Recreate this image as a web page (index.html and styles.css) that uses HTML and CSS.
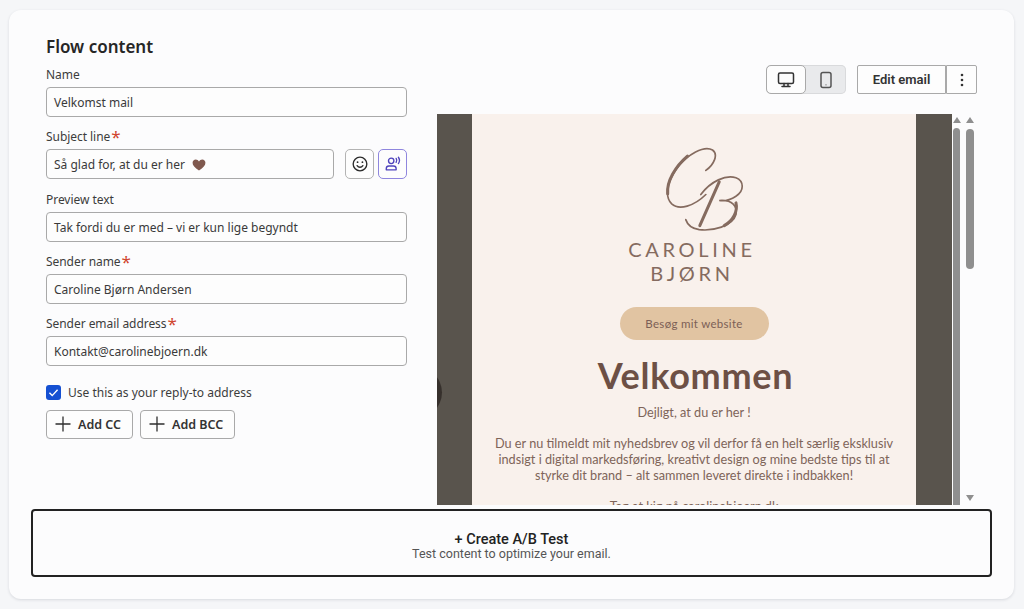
FILE: index.html
```html
<!DOCTYPE html>
<html lang="en">
<head>
<meta charset="utf-8">
<title>Flow content</title>
<link rel="stylesheet" href="styles.css">
</head>
<body>
<main class="card">
  <div class="upper">
    <h1 class="title">Flow content</h1>
    <div class="columns">
      <form class="fields">
        <div class="field">
          <label class="label">Name</label>
          <div class="input">Velkomst mail</div>
        </div>
        <div class="field">
          <label class="label">Subject line<span class="req">*</span></label>
          <div class="input-row">
            <div class="input grow">Så glad for, at du er her
              <svg class="heart" viewBox="0 0 16 14"><path d="M8 13.5C3 9.8.5 7.4.5 4.3.5 2 2.2.5 4.2.5 5.8.5 7.2 1.4 8 2.8 8.8 1.4 10.2.5 11.8.5c2 0 3.7 1.5 3.7 3.8 0 3.1-2.500 5.500-7.500 9.200z"/></svg>
            </div>
            <button type="button" class="icon-btn first">
              <svg viewBox="0 0 20 20" class="ic"><circle cx="10" cy="10" r="7.600"/><circle class="dot" cx="7.300" cy="8" r="1"/><circle class="dot" cx="12.700" cy="8" r="1"/><path d="M6.800 11.800c1.600 2.400 4.800 2.400 6.400 0"/></svg>
            </button>
            <button type="button" class="icon-btn accent">
              <svg viewBox="0 0 20 20" class="ic"><circle cx="8" cy="6.500" r="3"/><path d="M2.500 16.500v-1.300c0-1.800 1.300-3 3-3h5c1.700 0 3 1.200 3 3v1.300z"/><path d="M13.500 3.800c.9 1.400.9 3 0 4.400M16 2.500c1.600 2.300 1.600 4.700 0 7"/></svg>
            </button>
          </div>
        </div>
        <div class="field">
          <label class="label">Preview text</label>
          <div class="input">Tak fordi du er med – vi er kun lige begyndt</div>
        </div>
        <div class="field">
          <label class="label">Sender name<span class="req">*</span></label>
          <div class="input">Caroline Bjørn Andersen</div>
        </div>
        <div class="field">
          <label class="label">Sender email address<span class="req">*</span></label>
          <div class="input">Kontakt@carolinebjoern.dk</div>
        </div>
        <div class="check-row">
          <span class="checkbox"><svg viewBox="0 0 14 14"><path d="M3.200 7.300l2.600 2.600 5-5.400"/></svg></span>
          <span class="check-label">Use this as your reply-to address</span>
        </div>
        <div class="add-row">
          <button type="button" class="add-btn cc"><svg viewBox="0 0 16 16" class="plus"><path d="M8 .5v15M.5 8h15"/></svg>Add CC</button>
          <button type="button" class="add-btn bcc"><svg viewBox="0 0 16 16" class="plus"><path d="M8 .5v15M.5 8h15"/></svg>Add BCC</button>
        </div>
      </form>
      <section class="right">
        <div class="toolbar">
          <div class="toggle">
            <button type="button" class="toggle-btn on">
              <svg viewBox="0 0 18 18" class="ic"><rect x="1.500" y="2" width="15" height="10.500" rx="1.500"/><path d="M7 12.500v2.500M11 12.500v2.500M5 15.500h8"/></svg>
            </button>
            <button type="button" class="toggle-btn">
              <svg viewBox="0 0 18 18" class="ic"><rect x="4" y="1.500" width="10" height="15" rx="2"/><circle class="dot" cx="9" cy="13.800" r=".6"/></svg>
            </button>
          </div>
          <button type="button" class="edit-btn">Edit email</button>
          <button type="button" class="more-btn">
            <svg viewBox="0 0 4 14" class="kebab"><circle cx="2" cy="2" r="1.300"/><circle cx="2" cy="7" r="1.300"/><circle cx="2" cy="12" r="1.300"/></svg>
          </button>
        </div>
        <div class="preview">
          <div class="viewport">
            <span class="arc"></span>
            <article class="email">
              <svg class="monogram" viewBox="255 45 245 260">
                <g class="thin">
                  <path d="M380 118C405 100 418 70 400 57 375 42 325 70 295 110 265 150 255 195 278 218 300 238 345 225 380 190"/>
                  <path d="M365 190C395 150 440 130 470 140 495 150 495 180 470 195 455 205 435 210 420 208 460 205 475 225 470 250 460 285 400 300 360 295 340 292 325 280 320 265"/>
                </g>
                <g class="thick">
                  <path d="M325 75C290 105 262 150 266 188"/>
                  <path d="M420 152L362 283"/>
                  <path d="M470 215C476 240 462 268 435 283"/>
                </g>
              </svg>
              <div class="brand">CAROLINE</div>
              <div class="brand second">BJØRN</div>
              <a class="visit">Besøg mit website</a>
              <h2 class="welcome">Velkommen</h2>
              <p class="line">Dejligt, at du er her !</p>
              <p class="line para">Du er nu tilmeldt mit nyhedsbrev og vil derfor få en helt særlig eksklusiv indsigt i digital markedsføring, kreativt design og mine bedste tips til at styrke dit brand – alt sammen leveret direkte i indbakken!</p>
              <p class="line para">Tag et kig på carolinebjoern.dk</p>
            </article>
          </div>
          <div class="scroll inner"><i class="up"></i><b class="thumb"></b></div>
          <div class="scroll outer"><i class="up"></i><b class="thumb"></b><i class="down"></i></div>
        </div>
      </section>
    </div>
  </div>
  <button type="button" class="ab-test">
    <span class="ab-title">+ Create A/B Test</span>
    <span class="ab-sub">Test content to optimize your email.</span>
  </button>
</main>
</body>
</html>
```
FILE: styles.css
```css
* { box-sizing: border-box; }
html, body { margin: 0; height: 100%; }
body {
  background: #f5f6f8;
  padding: 10px 10px 10px 9px;
  font-family: "Noto Sans", "Open Sans", sans-serif;
  color: #2b2b2b;
  overflow: hidden;
}
button { font: inherit; color: inherit; background: #fdfdfd; padding: 0; cursor: pointer; }
.card {
  width: 1005px;
  height: 589px;
  background: #fcfcfd;
  border-radius: 12px;
  box-shadow: 0 1px 3px rgba(40, 50, 70, .14);
  padding: 23px 22px 22px;
  display: flex;
  flex-direction: column;
}
.upper { padding: 0 15px; }
.title { margin: 0; padding-top: 1px; font-size: 17px; line-height: 25px; font-weight: 600; color: #262626; }
.columns { display: grid; grid-template-columns: 361px 540px; column-gap: 30px; margin-top: 6px; }
.fields { display: flex; flex-direction: column; gap: 10.250px; }
.label { display: block; font-size: 12px; line-height: 19px; margin-bottom: 3px; color: #3c3c3c; letter-spacing: -.05px; }
.req { color: #d0452f; font-size: 17px; line-height: 14px; margin-left: 1px; vertical-align: -2px; }
.input {
  height: 30px;
  border: 1px solid #a9a9a9;
  border-radius: 4px;
  background: #fdfdfd;
  padding: 0 7px;
  font-size: 12px;
  line-height: 29px;
  color: #3a3a3a;
  white-space: nowrap;
}
.input-row { display: flex; }
.grow { width: 288px; }
.heart { width: 14px; height: 12px; margin-left: 4px; vertical-align: -2px; fill: #80594e; }
.icon-btn {
  width: 29px;
  height: 30px;
  border: 1px solid #b3b3b3;
  border-radius: 5px;
  display: flex;
  align-items: center;
  justify-content: center;
}
.icon-btn.first { margin-left: 11px; }
.icon-btn.accent { margin-left: 4px; border-color: #8f86de; color: #4f43bd; }
.ic { width: 18px; height: 18px; fill: none; stroke: currentColor; stroke-width: 1.500; stroke-linecap: round; stroke-linejoin: round; }
.ic .dot { fill: currentColor; stroke: none; }
.check-row { display: flex; align-items: center; margin-top: 7px; height: 18px; }
.checkbox {
  width: 15px;
  height: 15px;
  border-radius: 3px;
  background: #1550d2;
  display: flex;
}
.checkbox svg { width: 15px; height: 15px; fill: none; stroke: #fff; stroke-width: 1.300; }
.check-label { margin-left: 7px; font-size: 12px; color: #3c3c3c; }
.add-row { display: flex; gap: 7px; margin-top: -2px; }
.add-btn {
  height: 29px;
  border: 1px solid #a9a9a9;
  border-radius: 4px;
  display: flex;
  align-items: center;
  font-size: 12.500px;
  font-weight: 600;
  color: #333;
  padding-left: 8px;
}
.add-btn.cc { width: 87px; }
.add-btn.bcc { width: 95px; }
.plus { width: 16px; height: 16px; margin-right: 7px; fill: none; stroke: #2e2e2e; stroke-width: 1.300; }
.right { min-width: 0; }
.toolbar { display: flex; justify-content: flex-end; height: 29px; margin-bottom: 20px; }
.toggle { display: flex; width: 80px; background: #e9eaec; border-radius: 5px; margin-right: 11px; box-shadow: inset 0 0 0 1px #d9dadc; }
.toggle-btn { width: 40px; border: 0; background: transparent; border-radius: 5px; display: flex; align-items: center; justify-content: center; color: #555; }
.toggle-btn.on { background: #fdfdfd; border: 1px solid #a9a9a9; color: #333; }
.edit-btn { width: 89px; border: 1px solid #a9a9a9; border-radius: 2px 0 0 2px; font-family: "Roboto", sans-serif; font-size: 13px; font-weight: 600; color: #333; }
.more-btn { width: 31px; margin-left: 0; border: 1px solid #a9a9a9; border-radius: 0 2px 2px 0; display: flex; align-items: center; justify-content: center; }
.kebab { width: 4px; height: 14px; fill: #333; }
.preview { display: flex; height: 391px; overflow: hidden; }
.viewport { position: relative; width: 515px; background: #59544d; padding: 0 36px 0 35px; flex: none; }
.arc {
  position: absolute;
  left: -55px;
  top: 251px;
  width: 60px;
  height: 55px;
  border-radius: 50%;
  background: #36302c;
}
.email {
  position: relative;
  height: 100%;
  background: #f9f1ec;
  text-align: center;
  color: #7e6459;
  font-family: "Lato", sans-serif;
  padding: 32px 20px 0;
  overflow: hidden;
}
.monogram { display: block; width: 82px; height: 87px; margin: 0 auto 0; transform: translateX(11px); }
.monogram g { fill: none; stroke: #856b5f; stroke-linecap: round; }
.monogram .thin { stroke-width: 5; }
.monogram .thick { stroke-width: 9; }
.brand { font-size: 20px; line-height: 24px; letter-spacing: 3.700px; color: #856b5f; margin-top: 4px; transform: translateX(-2px); }
.brand.second { margin-top: 0; }
.visit {
  display: block;
  width: 149px;
  height: 33px;
  margin: 22px auto 0;
  border-radius: 17px;
  background: #e1c4a2;
  font-size: 11.500px;
  line-height: 33px;
  letter-spacing: .3px;
  color: #7c5f56;
}
.welcome { margin: 13px 0 0; padding-left: 3px; font-size: 36px; line-height: 44px; font-weight: 700; letter-spacing: .7px; color: #6d5045; }
.line { margin: 7px 0 0; font-size: 12.700px; line-height: 16px; }
.para { margin-top: 15px; }
.scroll { position: relative; flex: none; }
.scroll.inner { width: 7px; margin-left: 1px; }
.scroll.outer { width: 8px; margin-left: 6px; }
.scroll .thumb { position: absolute; left: 0; right: 0; display: block; background: #8f8f8f; border-radius: 4px; }
.inner .thumb { top: 14px; height: 400px; }
.outer .thumb { top: 15px; height: 140px; }
.up, .down { position: absolute; left: 50%; margin-left: -4px; width: 0; height: 0; border-left: 4px solid transparent; border-right: 4px solid transparent; }
.up { top: 3px; border-bottom: 6px solid #8f8f8f; }
.down { top: 381px; border-top: 6px solid #8f8f8f; }
.ab-test {
  margin-top: 4px;
  height: 68px;
  border: 2px solid #222;
  border-radius: 4px;
  background: #fcfcfd;
  display: flex;
  flex-direction: column;
  align-items: center;
  justify-content: center;
  font-family: "Roboto", sans-serif;
  flex: none;
}
.ab-title { font-size: 14.500px; line-height: 14px; font-weight: 500; color: #222; margin-top: 7px; }
.ab-sub { font-size: 12.500px; line-height: 14px; color: #555; margin-top: 0; }
```
